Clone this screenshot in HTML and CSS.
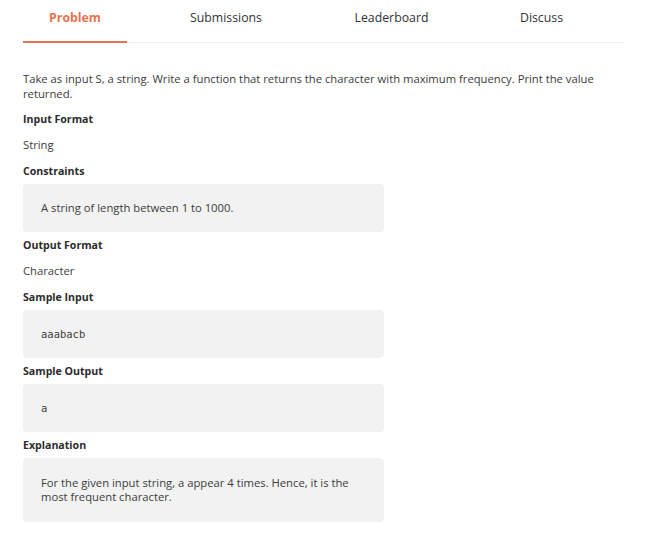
FILE: index.html
```html
<!DOCTYPE html>
<html>
<head>
<meta charset="utf-8">
<link rel="stylesheet" href="styles.css">
</head>
<body>
<nav class="tabs">
  <div class="tab active">Problem</div>
  <div class="tab">Submissions</div>
  <div class="tab">Leaderboard</div>
  <div class="tab">Discuss</div>
</nav>
<main class="content">
  <p class="intro">Take as input S, a string. Write a function that returns the character with maximum frequency. Print the value returned.</p>
  <h3 class="heading">Input Format</h3>
  <p class="text">String</p>
  <h3 class="heading">Constraints</h3>
  <div class="box">A string of length between 1 to 1000.</div>
  <h3 class="heading">Output Format</h3>
  <p class="text">Character</p>
  <h3 class="heading">Sample Input</h3>
  <div class="box mono">aaabacb</div>
  <h3 class="heading">Sample Output</h3>
  <div class="box mono">a</div>
  <h3 class="heading">Explanation</h3>
  <div class="box multi">For the given input string, a appear 4 times. Hence, it is the most frequent character.</div>
</main>
</body>
</html>
```

FILE: styles.css
```css
html, body {
  margin: 0;
  padding: 0;
  background: #ffffff;
}
body {
  font-family: "Open Sans", Lato, sans-serif;
  font-size: 11.25px;
  color: #3c3c3c;
  padding: 0 22px 0 23px;
}
.tabs {
  display: grid;
  grid-template-columns: 104px 198px 133px 1fr;
  border-bottom: 1px solid #ececec;
}
.tab {
  text-align: center;
  font-size: 12.3px;
  line-height: 16px;
  padding: 10px 0 16px;
  color: #333333;
}
.tab.active {
  color: #e8734f;
  font-weight: 700;
  border-bottom: 2px solid #e8734f;
  padding-bottom: 15px;
  margin-bottom: -1px;
}
.content {
  width: 602px;
}
.intro {
  margin: 28px 0 10px;
  line-height: 15px;
}
.heading {
  margin: 0;
  font-size: 10.6px;
  font-weight: 700;
  line-height: 16px;
  color: #2b2b2b;
}
.text {
  margin: 10px 0;
  line-height: 16px;
}
.box {
  width: 361px;
  box-sizing: border-box;
  margin: 5px 0;
  padding: 17px 24px 17px 18px;
  background: #f2f2f2;
  border-radius: 4px;
  line-height: 14px;
}
.box.multi {
  padding-top: 18px;
  padding-bottom: 18px;
}
.mono {
  font-family: "DejaVu Sans Mono", monospace;
  font-size: 10.5px;
}
```
